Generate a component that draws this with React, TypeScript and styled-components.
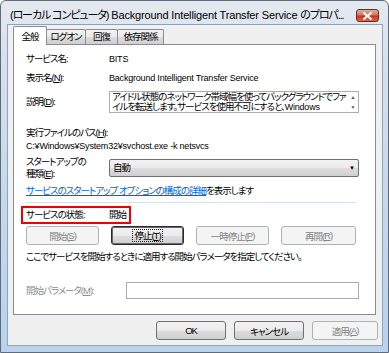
import styled, { createGlobalStyle, css } from "styled-components";

const GlobalStyle = createGlobalStyle`
  html, body {
    margin: 0;
    padding: 0;
    background: #ffffff;
  }
  body {
    font-family: "Liberation Sans", "Noto Sans CJK JP", sans-serif;
    font-feature-settings: "palt";
  }
`;

const Window = styled.div`
  width: 389px;
  height: 353px;
  box-sizing: border-box;
  border: 1px solid #5f6b78;
  border-radius: 6px 6px 0 0;
  background: linear-gradient(180deg, #e4e9ef 0px, #d6e1ec 60px, #c6d8ec 200px, #b9d2ee 100%);
  display: flex;
  flex-direction: column;
  padding: 0 5px 6px 6px;
`;

const TitleBar = styled.div`
  height: 26px;
  display: flex;
  align-items: flex-start;
`;

const Title = styled.div`
  flex: 1;
  min-width: 0;
  overflow: hidden;
  margin: 7px 0 0 3px;
  font-size: 11px;
  line-height: 14px;
  letter-spacing: -0.15px;
  color: #000;
  white-space: nowrap;
`;

const TitleJa = styled.span`
  letter-spacing: -1.1px;
`;

const CloseButton = styled.div`
  flex-shrink: 0;
  width: 21px;
  height: 11px;
  margin: 8px 4px 0 4px;
  border: 1px solid #6d2a22;
  border-radius: 3px;
  background: linear-gradient(180deg, #e9a99a 0%, #d8705c 45%, #c4371e 55%, #d46a48 100%);
  display: flex;
  align-items: center;
  justify-content: center;
`;

const Body = styled.div`
  flex: 1;
  background: #f0f0f0;
  border: 1px solid #8fa3b9;
  display: flex;
  flex-direction: column;
  padding: 0 6px 5px 5px;
  letter-spacing: -1px;
`;

const TabRow = styled.div`
  display: flex;
  align-items: flex-end;
  height: 19px;
  padding-left: 1px;
  position: relative;
  z-index: 1;
`;

const Tab = styled.div<{ $active?: boolean; $width: number }>`
  width: ${(p) => p.$width}px;
  box-sizing: border-box;
  font-size: 9.5px;
  line-height: 12px;
  text-align: center;
  border: 1px solid #898c95;
  border-bottom: none;
  border-radius: 2px 2px 0 0;
  padding-top: 1px;
  margin-left: -1px;
  white-space: nowrap;
  ${(p) =>
    p.$active
      ? css`
          background: #ffffff;
          padding-top: 4px;
          margin-bottom: -1px;
          height: 19px;
        `
      : css`
          background: linear-gradient(180deg, #f3f3f3 0%, #ebebeb 50%, #dcdcdc 51%, #cfcfcf 100%);
          height: 15px;
        `}
`;

const Panel = styled.div`
  background: #ffffff;
  border: 1px solid #898c95;
  height: 271px;
  box-sizing: border-box;
  padding: 0 16px 0 12px;
  display: flex;
  flex-direction: column;
  font-size: 9.5px;
  color: #000;
`;

const Row = styled.div<{ $top: number }>`
  display: flex;
  align-items: center;
  margin-top: ${(p) => p.$top}px;
`;

const Label = styled.div<{ $width?: number; $disabled?: boolean }>`
  width: ${(p) => p.$width ?? 83}px;
  flex-shrink: 0;
  line-height: 12px;
  white-space: nowrap;
  color: ${(p) => (p.$disabled ? "#8d8d8d" : "#000")};
`;

const Value = styled.div`
  line-height: 14px;
  white-space: nowrap;
`;

const Latin = styled.span`
  font-size: 9px;
  letter-spacing: -0.2px;
`;

const Text = styled.div<{ $top: number }>`
  margin-top: ${(p) => p.$top}px;
  line-height: 13px;
  white-space: nowrap;
`;

const Acc = styled.span`
  text-decoration: underline;
`;

const DescBox = styled.div`
  flex: 1;
  height: 22px;
  box-sizing: border-box;
  border: 1px solid #abadb3;
  display: flex;
  overflow: hidden;
`;

const DescText = styled.div`
  flex: 1;
  min-width: 0;
  padding: 0 2px;
  line-height: 10px;
  overflow: hidden;
  white-space: nowrap;
`;

const ScrollBar = styled.div`
  width: 10px;
  flex-shrink: 0;
  display: flex;
  flex-direction: column;
  justify-content: space-between;
  align-items: center;
  padding: 2px 0;
  color: #555;
  font-size: 5px;
  line-height: 6px;
  letter-spacing: 0;
`;

const Select = styled.div`
  flex: 1;
  height: 18px;
  box-sizing: border-box;
  border: 1px solid #707070;
  border-radius: 2px;
  background: linear-gradient(180deg, #f2f2f2 0%, #ebebeb 50%, #dddddd 51%, #cfcfcf 100%);
  display: flex;
  align-items: center;
  justify-content: space-between;
  padding: 0 4px 0 3px;
  line-height: 12px;
`;

const Arrow = styled.span`
  font-size: 6px;
  color: #000;
`;

const LinkText = styled.span`
  color: #0066cc;
  text-decoration: underline;
`;

const Separator = styled.div`
  margin-top: 5px;
  height: 1px;
  background: #d5dfe5;
  margin-right: 3px;
`;

const StatusBox = styled.div`
  margin-top: 3px;
  margin-left: -5px;
  width: 110px;
  height: 18px;
  box-sizing: border-box;
  border: 2px solid #ee0000;
  display: flex;
  align-items: center;
  padding-left: 3px;
`;

const ButtonRow = styled.div<{ $top: number }>`
  display: flex;
  gap: 12px;
  margin-top: ${(p) => p.$top}px;
`;

const Button = styled.div<{ $disabled?: boolean; $focus?: boolean; $width?: number }>`
  width: ${(p) => p.$width ?? 73}px;
  height: 19px;
  box-sizing: border-box;
  border-radius: 3px;
  font-size: 9.5px;
  display: flex;
  align-items: center;
  justify-content: center;
  white-space: nowrap;
  ${(p) =>
    p.$disabled
      ? css`
          border: 1px solid #adb2b5;
          background: #f4f4f4;
          color: #838383;
        `
      : css`
          border: 1px solid #707070;
          background: linear-gradient(180deg, #f2f2f2 0%, #ebebeb 50%, #dddddd 51%, #cfcfcf 100%);
          color: #000;
        `}
  ${(p) =>
    p.$focus &&
    css`
      border: 1px solid #2a2a2a;
      box-shadow: inset 0 0 0 1px #6a6a6a;
    `}
`;

const FocusRect = styled.span`
  outline: 1px dotted #222;
  padding: 0 1px;
  line-height: 11px;
`;

const Input = styled.div`
  flex: 1;
  height: 17px;
  box-sizing: border-box;
  border: 1px solid #abadb3;
  background: #fff;
`;

const Footer = styled.div`
  display: flex;
  justify-content: flex-end;
  gap: 8px;
  margin-top: 6px;
  margin-right: -2px;
`;

export default function App() {
  return (
    <>
      <GlobalStyle />
      <Window>
        <TitleBar>
          <Title>
            <TitleJa>(ローカル コンピュータ)</TitleJa> Background Intelligent Transfer Service{" "}
            <TitleJa>のプロパ...</TitleJa>
          </Title>
          <CloseButton>
            <svg width="9" height="8" viewBox="0 0 9 8">
              <path d="M1 1 L8 7 M8 1 L1 7" stroke="#ffffff" strokeWidth="2" strokeLinecap="square" />
            </svg>
          </CloseButton>
        </TitleBar>
        <Body>
          <TabRow>
            <Tab $active $width={34}>
              全般
            </Tab>
            <Tab $width={40}>ログオン</Tab>
            <Tab $width={33}>回復</Tab>
            <Tab $width={47}>依存関係</Tab>
          </TabRow>
          <Panel>
            <Row $top={7}>
              <Label>サービス名:</Label>
              <Value>
                <Latin>BITS</Latin>
              </Value>
            </Row>
            <Row $top={5}>
              <Label>
                表示名(<Acc>N</Acc>):
              </Label>
              <Value>
                <Latin>Background Intelligent Transfer Service</Latin>
              </Value>
            </Row>
            <Row $top={6}>
              <Label>
                説明(<Acc>D</Acc>):
              </Label>
              <DescBox>
                <DescText>
                  アイドル状態のネットワーク帯域幅を使ってバックグラウンドでファ
                  <br />
                  イルを転送します。サービスを使用不可にすると、<Latin>Windows</Latin>
                </DescText>
                <ScrollBar>
                  <span>▲</span>
                  <span>▼</span>
                </ScrollBar>
              </DescBox>
            </Row>
            <Text $top={13}>
              実行ファイルのパス(<Acc>H</Acc>):
            </Text>
            <Text $top={0}>
              <Latin>C:¥Windows¥System32¥svchost.exe -k netsvcs</Latin>
            </Text>
            <Row $top={3}>
              <Label>
                スタートアップの
                <br />
                種類(<Acc>E</Acc>):
              </Label>
              <Select>
                <span>自動</span>
                <Arrow>▼</Arrow>
              </Select>
            </Row>
            <Text $top={4}>
              <LinkText>サービスのスタートアップ オプションの構成の詳細</LinkText>を表示します
            </Text>
            <Separator />
            <StatusBox>
              <Label $width={83}>サービスの状態:</Label>
              <Value>開始</Value>
            </StatusBox>
            <ButtonRow $top={2}>
              <Button $disabled>
                開始(<Acc>S</Acc>)
              </Button>
              <Button $focus>
                <FocusRect>
                  停止(<Acc>T</Acc>)
                </FocusRect>
              </Button>
              <Button $disabled>
                一時停止(<Acc>P</Acc>)
              </Button>
              <Button $disabled $width={75}>
                再開(<Acc>R</Acc>)
              </Button>
            </ButtonRow>
            <Text $top={5}>ここでサービスを開始するときに適用する開始パラメータを指定してください。</Text>
            <Row $top={19}>
              <Label $width={100} $disabled>
                開始パラメータ(<Acc>M</Acc>):
              </Label>
              <Input />
            </Row>
          </Panel>
          <Footer>
            <Button $width={70}>OK</Button>
            <Button $width={70}>キャンセル</Button>
            <Button $width={66} $disabled>
              適用(<Acc>A</Acc>)
            </Button>
          </Footer>
        </Body>
      </Window>
    </>
  );
}
